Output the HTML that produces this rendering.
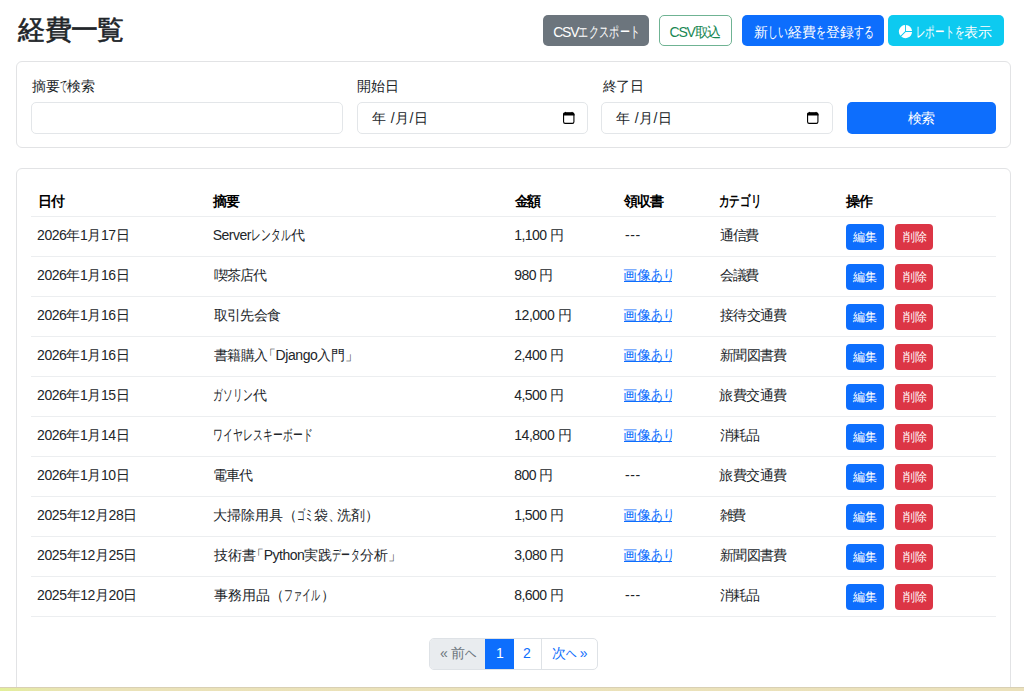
<!DOCTYPE html>
<html lang="ja"><head><meta charset="utf-8">
<style>
*{box-sizing:border-box;margin:0;padding:0}
html,body{width:1024px;height:691px;overflow:hidden;background:#fff}
body{font-family:"Liberation Sans",sans-serif;font-size:14px;color:#212529;position:relative}
.t{position:absolute;white-space:nowrap;line-height:20px}
.bx{position:absolute}
.btn{position:absolute;border-radius:5px}
.card{position:absolute;left:16px;width:995px;border:1px solid #e2e3e5;border-radius:6px;background:#fff}
.inp{position:absolute;top:102px;height:32px;border:1px solid #e3e6e9;border-radius:5px;background:#fff}
.ln{position:absolute;left:31px;width:965px;height:1px;background:#eceef0}
.e,.d{position:absolute;width:38px;height:26px;border-radius:4px}
.e{left:846px;background:#0d6efd}
.d{left:895px;background:#dc3545}
.cal{position:absolute}

.k{display:inline-block;font-style:normal}
.k>i{display:inline-block;font-style:normal;transform-origin:0 60%}
.ul{position:absolute;width:48px;height:1px;background:#0d6efd}

</style></head><body>
<div class="btn" style="left:543px;top:15px;width:106px;height:31px;background:#6c757d"></div>
<div class="btn" style="left:659px;top:15px;width:73px;height:31px;border:1px solid #6fb393;background:#fff"></div>
<div class="btn" style="left:742px;top:15px;width:142px;height:31px;background:#0d6efd"></div>
<div class="btn" style="left:888px;top:15px;width:116px;height:31px;background:#0dcaf0"></div>
<svg class="bx" style="left:898px;top:23.5px" width="15" height="15" viewBox="0 0 16 16"><path fill="#fff" d="M7.5 1.018a7 7 0 0 0-4.79 11.566L7.5 7.793zm1 0V7.5h6.482A7 7 0 0 0 8.5 1.018M14.982 8.5H8.207l-4.79 4.79A7 7 0 0 0 14.982 8.5"/></svg>
<div class="card" style="top:61px;height:87px"></div>
<div class="inp" style="left:31px;width:312px"></div>
<div class="inp" style="left:357px;width:231px"></div>
<div class="inp" style="left:601px;width:232px"></div>
<svg class="cal" style="left:563px;top:111px" width="11.5" height="13" viewBox="0 0 12 13" preserveAspectRatio="none"><rect x="0.6" y="1.9" width="10.8" height="10.5" rx="1.6" fill="none" stroke="#000" stroke-width="1.15"/><path d="M0 3.5a1.8 1.8 0 0 1 1.8-1.8h8.4a1.8 1.8 0 0 1 1.8 1.8v1.1h-12z" fill="#000"/><path d="M1.8 2.2L2.6 0.6L3.4 2.2zM8.6 2.2L9.4 0.6L10.2 2.2z" fill="#000"/></svg>
<svg class="cal" style="left:807px;top:111px" width="11.5" height="13" viewBox="0 0 12 13" preserveAspectRatio="none"><rect x="0.6" y="1.9" width="10.8" height="10.5" rx="1.6" fill="none" stroke="#000" stroke-width="1.15"/><path d="M0 3.5a1.8 1.8 0 0 1 1.8-1.8h8.4a1.8 1.8 0 0 1 1.8 1.8v1.1h-12z" fill="#000"/><path d="M1.8 2.2L2.6 0.6L3.4 2.2zM8.6 2.2L9.4 0.6L10.2 2.2z" fill="#000"/></svg>
<div class="btn" style="left:847px;top:102px;width:149px;height:32px;background:#0d6efd"></div>
<div class="card" style="top:168px;height:560px"></div>
<div class="ln" style="top:216px"></div>
<div class="ln" style="top:256px"></div>
<div class="ln" style="top:296px"></div>
<div class="ln" style="top:336px"></div>
<div class="ln" style="top:376px"></div>
<div class="ln" style="top:416px"></div>
<div class="ln" style="top:456px"></div>
<div class="ln" style="top:496px"></div>
<div class="ln" style="top:536px"></div>
<div class="ln" style="top:576px"></div>
<div class="ln" style="top:616px"></div>
<div class="e" style="top:224px"></div><div class="d" style="top:224px"></div>
<div class="e" style="top:264px"></div><div class="d" style="top:264px"></div>
<div class="e" style="top:304px"></div><div class="d" style="top:304px"></div>
<div class="e" style="top:344px"></div><div class="d" style="top:344px"></div>
<div class="e" style="top:384px"></div><div class="d" style="top:384px"></div>
<div class="e" style="top:424px"></div><div class="d" style="top:424px"></div>
<div class="e" style="top:464px"></div><div class="d" style="top:464px"></div>
<div class="e" style="top:504px"></div><div class="d" style="top:504px"></div>
<div class="e" style="top:544px"></div><div class="d" style="top:544px"></div>
<div class="e" style="top:584px"></div><div class="d" style="top:584px"></div>
<div class="bx" style="left:429px;top:638px;width:169px;height:32px;border:1px solid #dee2e6;border-radius:5px;overflow:hidden;background:#fff"><div class="bx" style="left:0;top:0;width:55px;height:30px;background:#e9ecef"></div><div class="bx" style="left:55px;top:0;width:29px;height:30px;background:#0d6efd"></div><div class="bx" style="left:111px;top:0;width:1px;height:30px;background:#dee2e6"></div></div>
<div class="bx" style="left:0;top:687px;width:1024px;height:1px;background:#d9d0b4"></div>
<div class="bx" style="left:0;top:688px;width:1024px;height:3px;background:linear-gradient(90deg,#e2ef98 0,#e6e8aa 30px,#eae2b8 80px,#ebe1bb 100%)"></div>
<div class="ul" style="left:624px;top:281px"></div><div class="ul" style="left:624px;top:321px"></div><div class="ul" style="left:624px;top:361px"></div><div class="ul" style="left:624px;top:401px"></div><div class="ul" style="left:624px;top:441px"></div><div class="ul" style="left:624px;top:521px"></div><div class="ul" style="left:624px;top:561px"></div>
<span class="t" id="title" style="left:18.20px;top:20.00px;font-size:27px;color:#212529;letter-spacing:-0.599px;-webkit-text-stroke:0.6px currentColor;">経費一覧</span>
<span class="t" id="bt1" style="left:553.30px;top:21.70px;font-size:14px;color:#fff;"><span style="letter-spacing:-1.30px;">CSV</span><i class="k" style="width:10.33px"><i style="transform:scale(0.7382,1.1)">エ</i></i><i class="k" style="width:10.33px"><i style="transform:scale(0.7382,1.1)">ク</i></i><i class="k" style="width:10.33px"><i style="transform:scale(0.7382,1.1)">ス</i></i><i class="k" style="width:10.33px"><i style="transform:scale(0.7382,1.1)">ポ</i></i><i class="k" style="width:10.33px"><i style="transform:scale(0.7382,1.1)">ー</i></i><i class="k" style="width:10.33px"><i style="transform:scale(0.7382,1.1)">ト</i></i></span>
<span class="t" id="bt2" style="left:669.60px;top:21.70px;font-size:14px;color:#198754;letter-spacing:-1.250px;">CSV取込</span>
<span class="t" id="bt3" style="left:753.60px;top:21.70px;font-size:14px;color:#fff;">新<i class="k" style="width:10.08px"><i style="transform:scale(0.7199,1.1)">し</i></i><i class="k" style="width:10.08px"><i style="transform:scale(0.7199,1.1)">い</i></i>経費<i class="k" style="width:10.08px"><i style="transform:scale(0.7199,1.1)">を</i></i>登録<i class="k" style="width:10.08px"><i style="transform:scale(0.7199,1.1)">す</i></i><i class="k" style="width:10.08px"><i style="transform:scale(0.7199,1.1)">る</i></i></span>
<span class="t" id="bt4" style="left:915.70px;top:21.70px;font-size:14px;color:#fff;"><i class="k" style="width:9.72px"><i style="transform:scale(0.6941,1.1)">レ</i></i><i class="k" style="width:9.72px"><i style="transform:scale(0.6941,1.1)">ポ</i></i><i class="k" style="width:9.72px"><i style="transform:scale(0.6941,1.1)">ー</i></i><i class="k" style="width:9.72px"><i style="transform:scale(0.6941,1.1)">ト</i></i><i class="k" style="width:9.72px"><i style="transform:scale(0.6941,1.1)">を</i></i>表示</span>
<span class="t" id="lb1" style="left:31.60px;top:76.30px;font-size:14px;color:#212529;">摘要<i class="k" style="width:7.39px"><i style="transform:scale(0.5282,1.1)">で</i></i>検索</span>
<span class="t" id="lb2" style="left:356.50px;top:76.30px;font-size:14px;color:#212529;letter-spacing:0.200px;">開始日</span>
<span class="t" id="lb3" style="left:602.70px;top:76.30px;font-size:14px;color:#212529;letter-spacing:-0.500px;">終了日</span>
<span class="t" id="ph1" style="left:372.00px;top:108.00px;font-size:14px;color:#212529;letter-spacing:0.400px;">年 /月/日</span>
<span class="t" id="ph2" style="left:616.00px;top:108.00px;font-size:14px;color:#212529;letter-spacing:0.400px;">年 /月/日</span>
<span class="t" id="srch" style="left:908.10px;top:108.00px;font-size:14px;color:#fff;letter-spacing:-1.200px;">検索</span>
<span class="t" id="h0" style="left:37.60px;top:191.10px;font-size:14px;color:#000;letter-spacing:-0.800px;font-weight:bold;">日付</span>
<span class="t" id="h1" style="left:213.30px;top:191.10px;font-size:14px;color:#000;letter-spacing:-1.200px;font-weight:bold;">摘要</span>
<span class="t" id="h2" style="left:515.20px;top:191.10px;font-size:14px;color:#000;letter-spacing:-2.400px;font-weight:bold;">金額</span>
<span class="t" id="h3" style="left:623.80px;top:191.10px;font-size:14px;color:#000;letter-spacing:-0.800px;font-weight:bold;">領収書</span>
<span class="t" id="h4" style="left:718.50px;top:191.10px;font-size:14px;color:#000;font-weight:bold;"><i class="k" style="width:10.84px"><i style="transform:scale(0.7742,1.1)">カ</i></i><i class="k" style="width:10.84px"><i style="transform:scale(0.7742,1.1)">テ</i></i><i class="k" style="width:10.84px"><i style="transform:scale(0.7742,1.1)">ゴ</i></i><i class="k" style="width:10.84px"><i style="transform:scale(0.7742,1.1)">リ</i></i></span>
<span class="t" id="h5" style="left:846.00px;top:191.10px;font-size:14px;color:#000;letter-spacing:-1.000px;font-weight:bold;">操作</span>
<span class="t" id="r0c0" style="left:37.10px;top:224.90px;font-size:14px;color:#212529;letter-spacing:-0.443px;">2026年1月17日</span>
<span class="t" id="r0c1" style="left:212.70px;top:224.90px;font-size:14px;color:#212529;"><span style="letter-spacing:-0.50px;">Server</span><i class="k" style="width:10.00px"><i style="transform:scale(0.7143,1.1)">レ</i></i><i class="k" style="width:10.00px"><i style="transform:scale(0.7143,1.1)">ン</i></i><i class="k" style="width:10.00px"><i style="transform:scale(0.7143,1.1)">タ</i></i><i class="k" style="width:10.00px"><i style="transform:scale(0.7143,1.1)">ル</i></i>代</span>
<span class="t" id="r0c2" style="left:514.30px;top:224.90px;font-size:14px;color:#212529;letter-spacing:-0.602px;">1,100 円</span>
<span class="t" id="r0c3" style="left:624.90px;top:224.90px;font-size:14px;color:#212529;letter-spacing:0.700px;">---</span>
<span class="t" id="r0c4" style="left:720.20px;top:224.90px;font-size:14px;color:#212529;letter-spacing:-1.500px;">通信費</span>
<span class="t" id="r0e" style="left:853.30px;top:226.80px;font-size:12px;color:#fff;letter-spacing:0.200px;">編集</span>
<span class="t" id="r0d" style="left:902.50px;top:226.80px;font-size:12px;color:#fff;">削除</span>
<span class="t" id="r1c0" style="left:37.10px;top:264.90px;font-size:14px;color:#212529;letter-spacing:-0.443px;">2026年1月16日</span>
<span class="t" id="r1c1" style="left:213.70px;top:264.90px;font-size:14px;color:#212529;letter-spacing:-0.937px;">喫茶店代</span>
<span class="t" id="r1c2" style="left:514.30px;top:264.90px;font-size:14px;color:#212529;letter-spacing:-0.550px;">980 円</span>
<span class="t" id="r1c3" style="left:622.80px;top:264.90px;font-size:14px;color:#0d6efd;">画像<i class="k" style="width:12.06px"><i style="transform:scale(0.8613,1.1)">あ</i></i><i class="k" style="width:12.06px"><i style="transform:scale(0.8613,1.1)">り</i></i></span>
<span class="t" id="r1c4" style="left:720.20px;top:264.90px;font-size:14px;color:#212529;letter-spacing:-1.500px;">会議費</span>
<span class="t" id="r1e" style="left:853.30px;top:266.80px;font-size:12px;color:#fff;letter-spacing:0.200px;">編集</span>
<span class="t" id="r1d" style="left:902.50px;top:266.80px;font-size:12px;color:#fff;">削除</span>
<span class="t" id="r2c0" style="left:37.10px;top:304.90px;font-size:14px;color:#212529;letter-spacing:-0.443px;">2026年1月16日</span>
<span class="t" id="r2c1" style="left:213.70px;top:304.90px;font-size:14px;color:#212529;letter-spacing:-0.600px;">取引先会食</span>
<span class="t" id="r2c2" style="left:514.30px;top:304.90px;font-size:14px;color:#212529;letter-spacing:-0.480px;">12,000 円</span>
<span class="t" id="r2c3" style="left:622.80px;top:304.90px;font-size:14px;color:#0d6efd;">画像<i class="k" style="width:12.06px"><i style="transform:scale(0.8613,1.1)">あ</i></i><i class="k" style="width:12.06px"><i style="transform:scale(0.8613,1.1)">り</i></i></span>
<span class="t" id="r2c4" style="left:720.20px;top:304.90px;font-size:14px;color:#212529;letter-spacing:-0.800px;">接待交通費</span>
<span class="t" id="r2e" style="left:853.30px;top:306.80px;font-size:12px;color:#fff;letter-spacing:0.200px;">編集</span>
<span class="t" id="r2d" style="left:902.50px;top:306.80px;font-size:12px;color:#fff;">削除</span>
<span class="t" id="r3c0" style="left:37.10px;top:344.90px;font-size:14px;color:#212529;letter-spacing:-0.443px;">2026年1月16日</span>
<span class="t" id="r3c1" style="left:213.70px;top:344.90px;font-size:14px;color:#212529;letter-spacing:-0.424px;">書籍購入<span style="margin-left:-6px;">「</span>Django入門<span style="margin-right:-6px;">」</span></span>
<span class="t" id="r3c2" style="left:514.30px;top:344.90px;font-size:14px;color:#212529;letter-spacing:-0.602px;">2,400 円</span>
<span class="t" id="r3c3" style="left:622.80px;top:344.90px;font-size:14px;color:#0d6efd;">画像<i class="k" style="width:12.06px"><i style="transform:scale(0.8613,1.1)">あ</i></i><i class="k" style="width:12.06px"><i style="transform:scale(0.8613,1.1)">り</i></i></span>
<span class="t" id="r3c4" style="left:720.20px;top:344.90px;font-size:14px;color:#212529;letter-spacing:-0.800px;">新聞図書費</span>
<span class="t" id="r3e" style="left:853.30px;top:346.80px;font-size:12px;color:#fff;letter-spacing:0.200px;">編集</span>
<span class="t" id="r3d" style="left:902.50px;top:346.80px;font-size:12px;color:#fff;">削除</span>
<span class="t" id="r4c0" style="left:37.10px;top:384.90px;font-size:14px;color:#212529;letter-spacing:-0.443px;">2026年1月15日</span>
<span class="t" id="r4c1" style="left:212.70px;top:384.90px;font-size:14px;color:#212529;"><i class="k" style="width:9.96px"><i style="transform:scale(0.7112,1.1)">ガ</i></i><i class="k" style="width:9.96px"><i style="transform:scale(0.7112,1.1)">ソ</i></i><i class="k" style="width:9.96px"><i style="transform:scale(0.7112,1.1)">リ</i></i><i class="k" style="width:9.96px"><i style="transform:scale(0.7112,1.1)">ン</i></i>代</span>
<span class="t" id="r4c2" style="left:514.30px;top:384.90px;font-size:14px;color:#212529;letter-spacing:-0.602px;">4,500 円</span>
<span class="t" id="r4c3" style="left:622.80px;top:384.90px;font-size:14px;color:#0d6efd;">画像<i class="k" style="width:12.06px"><i style="transform:scale(0.8613,1.1)">あ</i></i><i class="k" style="width:12.06px"><i style="transform:scale(0.8613,1.1)">り</i></i></span>
<span class="t" id="r4c4" style="left:719.20px;top:384.90px;font-size:14px;color:#212529;letter-spacing:-0.550px;">旅費交通費</span>
<span class="t" id="r4e" style="left:853.30px;top:386.80px;font-size:12px;color:#fff;letter-spacing:0.200px;">編集</span>
<span class="t" id="r4d" style="left:902.50px;top:386.80px;font-size:12px;color:#fff;">削除</span>
<span class="t" id="r5c0" style="left:37.10px;top:424.90px;font-size:14px;color:#212529;letter-spacing:-0.443px;">2026年1月14日</span>
<span class="t" id="r5c1" style="left:212.70px;top:424.90px;font-size:14px;color:#212529;"><i class="k" style="width:10.06px"><i style="transform:scale(0.7188,1.1)">ワ</i></i><i class="k" style="width:10.06px"><i style="transform:scale(0.7188,1.1)">イ</i></i><i class="k" style="width:10.06px"><i style="transform:scale(0.7188,1.1)">ヤ</i></i><i class="k" style="width:10.06px"><i style="transform:scale(0.7188,1.1)">レ</i></i><i class="k" style="width:10.06px"><i style="transform:scale(0.7188,1.1)">ス</i></i><i class="k" style="width:10.06px"><i style="transform:scale(0.7188,1.1)">キ</i></i><i class="k" style="width:10.06px"><i style="transform:scale(0.7188,1.1)">ー</i></i><i class="k" style="width:10.06px"><i style="transform:scale(0.7188,1.1)">ボ</i></i><i class="k" style="width:10.06px"><i style="transform:scale(0.7188,1.1)">ー</i></i><i class="k" style="width:10.06px"><i style="transform:scale(0.7188,1.1)">ド</i></i></span>
<span class="t" id="r5c2" style="left:514.30px;top:424.90px;font-size:14px;color:#212529;letter-spacing:-0.480px;">14,800 円</span>
<span class="t" id="r5c3" style="left:622.80px;top:424.90px;font-size:14px;color:#0d6efd;">画像<i class="k" style="width:12.06px"><i style="transform:scale(0.8613,1.1)">あ</i></i><i class="k" style="width:12.06px"><i style="transform:scale(0.8613,1.1)">り</i></i></span>
<span class="t" id="r5c4" style="left:720.20px;top:424.90px;font-size:14px;color:#212529;letter-spacing:-1.000px;">消耗品</span>
<span class="t" id="r5e" style="left:853.30px;top:426.80px;font-size:12px;color:#fff;letter-spacing:0.200px;">編集</span>
<span class="t" id="r5d" style="left:902.50px;top:426.80px;font-size:12px;color:#fff;">削除</span>
<span class="t" id="r6c0" style="left:37.10px;top:464.90px;font-size:14px;color:#212529;letter-spacing:-0.443px;">2026年1月10日</span>
<span class="t" id="r6c1" style="left:212.70px;top:464.90px;font-size:14px;color:#212529;letter-spacing:-0.700px;">電車代</span>
<span class="t" id="r6c2" style="left:514.30px;top:464.90px;font-size:14px;color:#212529;letter-spacing:-0.550px;">800 円</span>
<span class="t" id="r6c3" style="left:624.90px;top:464.90px;font-size:14px;color:#212529;letter-spacing:0.700px;">---</span>
<span class="t" id="r6c4" style="left:719.20px;top:464.90px;font-size:14px;color:#212529;letter-spacing:-0.550px;">旅費交通費</span>
<span class="t" id="r6e" style="left:853.30px;top:466.80px;font-size:12px;color:#fff;letter-spacing:0.200px;">編集</span>
<span class="t" id="r6d" style="left:902.50px;top:466.80px;font-size:12px;color:#fff;">削除</span>
<span class="t" id="r7c0" style="left:37.10px;top:504.90px;font-size:14px;color:#212529;letter-spacing:-0.400px;">2025年12月28日</span>
<span class="t" id="r7c1" style="left:212.70px;top:504.90px;font-size:14px;color:#212529;">大掃除用具（<i class="k" style="width:8.50px"><i style="transform:scale(0.6071,1.1)">ゴ</i></i><i class="k" style="width:8.50px"><i style="transform:scale(0.6071,1.1)">ミ</i></i>袋<span style="margin-right:-5px;">、</span>洗剤）</span>
<span class="t" id="r7c2" style="left:514.30px;top:504.90px;font-size:14px;color:#212529;letter-spacing:-0.602px;">1,500 円</span>
<span class="t" id="r7c3" style="left:622.80px;top:504.90px;font-size:14px;color:#0d6efd;">画像<i class="k" style="width:12.06px"><i style="transform:scale(0.8613,1.1)">あ</i></i><i class="k" style="width:12.06px"><i style="transform:scale(0.8613,1.1)">り</i></i></span>
<span class="t" id="r7c4" style="left:720.20px;top:504.90px;font-size:14px;color:#212529;letter-spacing:-2.000px;">雑費</span>
<span class="t" id="r7e" style="left:853.30px;top:506.80px;font-size:12px;color:#fff;letter-spacing:0.200px;">編集</span>
<span class="t" id="r7d" style="left:902.50px;top:506.80px;font-size:12px;color:#fff;">削除</span>
<span class="t" id="r8c0" style="left:37.10px;top:544.90px;font-size:14px;color:#212529;letter-spacing:-0.400px;">2025年12月25日</span>
<span class="t" id="r8c1" style="left:213.70px;top:544.90px;font-size:14px;color:#212529;">技術書<span style="margin-left:-6px;">「</span><span style="letter-spacing:-0.50px;">Python</span>実践<i class="k" style="width:9.13px"><i style="transform:scale(0.6521,1.1)">デ</i></i><i class="k" style="width:9.13px"><i style="transform:scale(0.6521,1.1)">ー</i></i><i class="k" style="width:9.13px"><i style="transform:scale(0.6521,1.1)">タ</i></i>分析<span style="margin-right:-6px;">」</span></span>
<span class="t" id="r8c2" style="left:514.30px;top:544.90px;font-size:14px;color:#212529;letter-spacing:-0.602px;">3,080 円</span>
<span class="t" id="r8c3" style="left:622.80px;top:544.90px;font-size:14px;color:#0d6efd;">画像<i class="k" style="width:12.06px"><i style="transform:scale(0.8613,1.1)">あ</i></i><i class="k" style="width:12.06px"><i style="transform:scale(0.8613,1.1)">り</i></i></span>
<span class="t" id="r8c4" style="left:720.20px;top:544.90px;font-size:14px;color:#212529;letter-spacing:-0.800px;">新聞図書費</span>
<span class="t" id="r8e" style="left:853.30px;top:546.80px;font-size:12px;color:#fff;letter-spacing:0.200px;">編集</span>
<span class="t" id="r8d" style="left:902.50px;top:546.80px;font-size:12px;color:#fff;">削除</span>
<span class="t" id="r9c0" style="left:37.10px;top:584.90px;font-size:14px;color:#212529;letter-spacing:-0.400px;">2025年12月20日</span>
<span class="t" id="r9c1" style="left:213.70px;top:584.90px;font-size:14px;color:#212529;">事務用品（<i class="k" style="width:9.25px"><i style="transform:scale(0.6607,1.1)">フ</i></i><i class="k" style="width:9.25px"><i style="transform:scale(0.6607,1.1)">ァ</i></i><i class="k" style="width:9.25px"><i style="transform:scale(0.6607,1.1)">イ</i></i><i class="k" style="width:9.25px"><i style="transform:scale(0.6607,1.1)">ル</i></i>）</span>
<span class="t" id="r9c2" style="left:514.30px;top:584.90px;font-size:14px;color:#212529;letter-spacing:-0.602px;">8,600 円</span>
<span class="t" id="r9c3" style="left:624.90px;top:584.90px;font-size:14px;color:#212529;letter-spacing:0.700px;">---</span>
<span class="t" id="r9c4" style="left:720.20px;top:584.90px;font-size:14px;color:#212529;letter-spacing:-1.000px;">消耗品</span>
<span class="t" id="r9e" style="left:853.30px;top:586.80px;font-size:12px;color:#fff;letter-spacing:0.200px;">編集</span>
<span class="t" id="r9d" style="left:902.50px;top:586.80px;font-size:12px;color:#fff;">削除</span>
<span class="t" id="pg0" style="left:439.90px;top:643.10px;font-size:14px;color:#6c757d;"><span style="letter-spacing:-0.50px;">« </span>前<i class="k" style="width:11.65px"><i style="transform:scale(0.8319,1.1)">へ</i></i></span>
<span class="t" id="pg1" style="left:495.90px;top:643.10px;font-size:14px;color:#fff;">1</span>
<span class="t" id="pg2" style="left:523.10px;top:643.10px;font-size:14px;color:#0d6efd;">2</span>
<span class="t" id="pg3" style="left:551.60px;top:643.10px;font-size:14px;color:#0d6efd;">次<i class="k" style="width:10.80px"><i style="transform:scale(0.7714,1.1)">へ</i></i><span style="letter-spacing:-0.50px;"> »</span></span>
</body></html>
